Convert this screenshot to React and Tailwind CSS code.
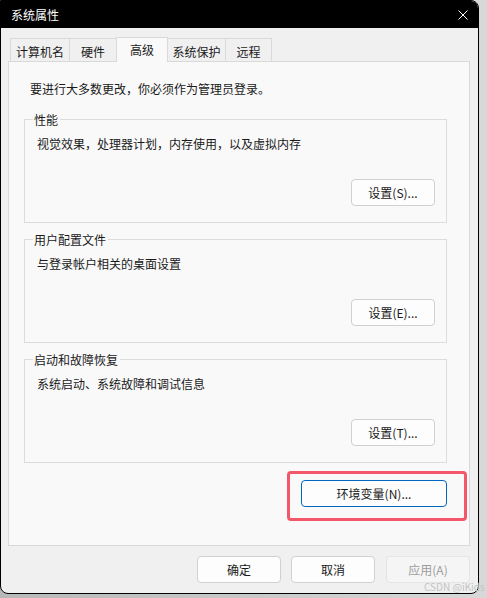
import React from "react";

const font = { fontFamily: '"Noto Sans CJK SC", "Noto Sans", sans-serif' };

const tabs = [
  { label: "计算机名", w: "w-[60px]" },
  { label: "硬件", w: "w-[48px]" },
  { label: "高级", w: "w-[52px]", active: true },
  { label: "系统保护", w: "w-[59px]" },
  { label: "远程", w: "w-[47px]" },
];

const Button = ({ children, className = "", disabled = false }) => (
  <button
    type="button"
    className={`h-[27px] rounded-[4px] border text-[12px] leading-[17px] ${
      disabled
        ? "border-[#e5e5e5] bg-[#f5f5f5] text-[#9d9d9d]"
        : "border-[#d0d0d0] bg-[#fdfdfd] text-[#1a1a1a]"
    } ${className}`}
  >
    {children}
  </button>
);

const GroupBox = ({ title, text, action, className = "" }) => (
  <div className={`relative ml-[15px] mr-[22px] border border-[#dcdcdc] ${className}`}>
    <span className="absolute -top-[9px] left-[8px] bg-[#f9f9f9] pl-[1px] pr-[2px] text-[12px] leading-[17px] text-[#1a1a1a]">
      {title}
    </span>
    <div className="pl-[12px] pt-[15px] text-[12px] leading-[17px] text-[#1a1a1a]">{text}</div>
    <div className="flex justify-end pr-[11px] pb-[16px] pt-[27px]">
      <Button className="w-[84px]">{action}</Button>
    </div>
  </div>
);

export default function App() {
  return (
    <div className="relative flex h-[598px] w-[487px] bg-gradient-to-r from-[#b8b8b8] to-[#d8d8d8]" style={font}>
      <div className="flex h-[594px] w-[479px] flex-col overflow-hidden rounded-tr-[8px] rounded-b-[8px] border border-black bg-[#f0f0f0]">
        {/* title bar */}
        <div className="flex h-[27px] items-center justify-between bg-black pl-[10px] pr-[10px]">
          <span className="text-[12px] leading-[17px] text-white">系统属性</span>
          <svg width="10" height="10" viewBox="0 0 10 10">
            <path d="M0.5 0.5 L9.5 9.5 M9.5 0.5 L0.5 9.5" stroke="#ffffff" strokeWidth="1" fill="none" />
          </svg>
        </div>

        {/* tabs */}
        <div className="relative z-10 ml-[9px] mt-[9px] flex items-end">
          {tabs.map((t, i) => (
            <div
              key={t.label}
              className={`${t.w} ${i > 0 ? "-ml-px" : ""} flex justify-center border border-b-0 border-[#d9d9d9] text-[12px] leading-[17px] text-[#1a1a1a] ${
                t.active
                  ? "relative z-10 -mb-px h-[25px] items-start bg-[#f9f9f9] pt-[3px]"
                  : "h-[23px] items-start bg-[#f0f0f0] pt-[4px]"
              }`}
            >
              {t.label}
            </div>
          ))}
        </div>

        {/* panel */}
        <div className="ml-[7px] flex h-[485px] w-[462px] flex-col border border-[#d9d9d9] bg-[#f9f9f9]">
          <div className="pl-[21px] pt-[18px] text-[12px] leading-[17px] text-[#1a1a1a]">
            要进行大多数更改，你必须作为管理员登录。
          </div>

          <GroupBox
            className="mt-[22px]"
            title="性能"
            text="视觉效果，处理器计划，内存使用，以及虚拟内存"
            action="设置(S)..."
          />
          <GroupBox
            className="mt-[16px]"
            title="用户配置文件"
            text="与登录帐户相关的桌面设置"
            action="设置(E)..."
          />
          <GroupBox
            className="mt-[16px]"
            title="启动和故障恢复"
            text="系统启动、系统故障和调试信息"
            action="设置(T)..."
          />

          <div className="mt-[8px] flex justify-end pr-[2px]">
            <div className="rounded-[4px] border-[3px] border-[#f4566a] pb-[11px] pl-[11px] pr-[17px] pt-[6px]">
              <button
                type="button"
                className="h-[27px] w-[146px] rounded-[4px] border border-[#0067c0] bg-[#fdfdfd] text-[12px] leading-[17px] text-[#1a1a1a]"
              >
                环境变量(N)...
              </button>
            </div>
          </div>
        </div>

        {/* footer buttons */}
        <div className="mt-[10px] flex gap-[10px] pl-[196px]">
          <Button className="w-[84px]">确定</Button>
          <Button className="w-[84px]">取消</Button>
          <Button className="ml-px w-[84px]" disabled>
            应用(A)
          </Button>
        </div>
      </div>

      <span className="absolute left-[424px] top-[580px] text-[10px] leading-[13px] text-[#c4c4c4]">
        CSDN @iKids
      </span>
    </div>
  );
}
